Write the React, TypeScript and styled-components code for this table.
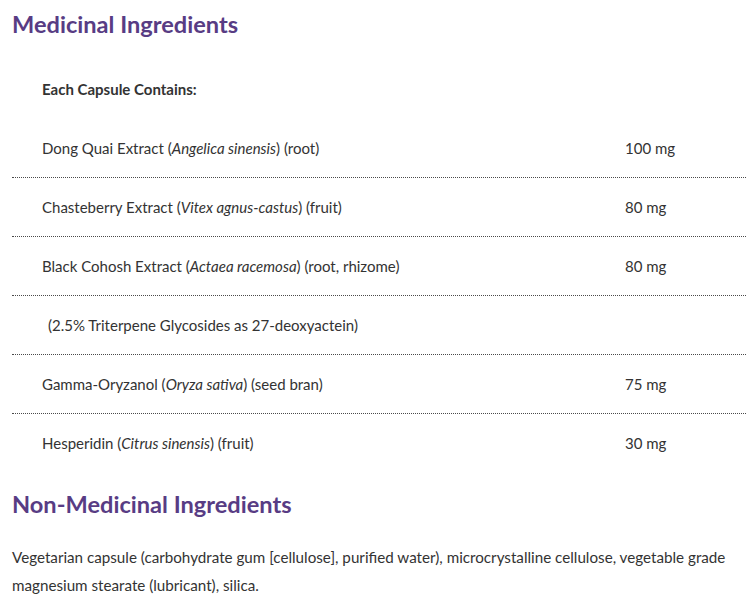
import React from 'react';
import styled, { createGlobalStyle } from 'styled-components';

const GlobalStyle = createGlobalStyle`
    html, body {
        margin: 0;
        padding: 0;
        background: #ffffff;
    }
    body {
        font-family: Lato, "Open Sans", Arial, sans-serif;
        color: #333333;
    }
`;

const Page = styled.div`
    width: 746px;
    padding-left: 12px;
    box-sizing: border-box;
    overflow: hidden;
`;

const Heading = styled.h2<{ $top: number; $bottom: number }>`
    margin: ${(p) => p.$top}px 0 ${(p) => p.$bottom}px;
    font-size: 23.6px;
    line-height: 30px;
    font-weight: 700;
    color: #583c84;
`;

const Table = styled.div`
    display: flex;
    flex-direction: column;
`;

const Row = styled.div<{ $line: boolean }>`
    display: flex;
    align-items: center;
    padding: 18px 0;
    height: 22px;
    border-bottom: 1px dotted ${(p) => (p.$line ? '#4a4a4a' : 'transparent')};
    font-size: 15px;
    line-height: 22px;
`;

const Name = styled.div<{ $bold?: boolean; $indent?: number }>`
    flex: 1;
    padding-left: ${(p) => p.$indent ?? 30}px;
    font-weight: ${(p) => (p.$bold ? 700 : 400)};
    white-space: nowrap;
`;

const Amount = styled.div`
    width: 121px;
    white-space: nowrap;
`;

const Text = styled.p`
    margin: 0;
    font-size: 15.2px;
    line-height: 28px;
    padding-right: 4px;
`;

type Item = { name: React.ReactNode; amount?: string; indent?: number };

const items: Item[] = [
    { name: <>Dong Quai Extract (<i>Angelica sinensis</i>) (root)</>, amount: '100 mg' },
    { name: <>Chasteberry Extract (<i>Vitex agnus-castus</i>) (fruit)</>, amount: '80 mg' },
    { name: <>Black Cohosh Extract (<i>Actaea racemosa</i>) (root, rhizome)</>, amount: '80 mg' },
    { name: '(2.5% Triterpene Glycosides as 27-deoxyactein)', indent: 36 },
    { name: <>Gamma-Oryzanol (<i>Oryza sativa</i>) (seed bran)</>, amount: '75 mg' },
    { name: <>Hesperidin (<i>Citrus sinensis</i>) (fruit)</>, amount: '30 mg' },
];

const App: React.FC = () => {
    return (
        <Page>
            <GlobalStyle />
            <Heading $top={9} $bottom={21}>Medicinal Ingredients</Heading>
            <Table>
                <Row $line={false}>
                    <Name $bold>Each Capsule Contains:</Name>
                </Row>
                {items.map((item, i) => (
                    <Row key={i} $line={i < items.length - 1}>
                        <Name $indent={item.indent}>{item.name}</Name>
                        <Amount>{item.amount}</Amount>
                    </Row>
                ))}
            </Table>
            <Heading $top={16} $bottom={24}>Non-Medicinal Ingredients</Heading>
            <Text>
                Vegetarian capsule (carbohydrate gum [cellulose], purified water), microcrystalline
                cellulose, vegetable grade magnesium stearate (lubricant), silica.
            </Text>
        </Page>
    );
};

export default App;
